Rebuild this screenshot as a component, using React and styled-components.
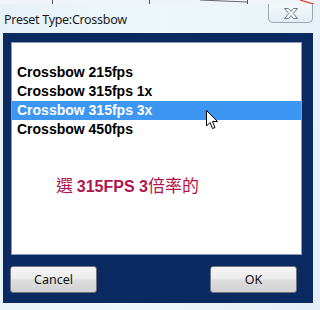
import styled, { createGlobalStyle } from 'styled-components';

const GlobalStyle = createGlobalStyle`
  html, body {
    margin: 0;
    padding: 0;
    width: 320px;
    height: 310px;
    overflow: hidden;
    background: #eaf4f9;
  }
`;

const Window = styled.div`
  width: 320px;
  height: 310px;
  display: flex;
  flex-direction: column;
  background: linear-gradient(100deg, #e6f1f7 0%, #eef7fb 45%, #e4f0f6 100%);
  font-family: "Noto Sans", "Open Sans", sans-serif;
`;

const Backdrop = styled.svg`
  display: block;
  width: 320px;
  height: 4px;
  flex: none;
`;

const TitleBar = styled.div`
  height: 29px;
  display: flex;
  justify-content: space-between;
  align-items: flex-start;
  flex: none;
`;

const Title = styled.div`
  padding: 7px 0 0 4px;
  font-size: 12.5px;
  color: #1a1a1a;
  letter-spacing: -0.3px;
`;

const CloseButton = styled.div`
  width: 45px;
  height: 19px;
  margin-right: 7px;
  box-sizing: border-box;
  border: 1px solid #9aa6b0;
  border-top: none;
  border-radius: 0 0 5px 5px;
  background: linear-gradient(#f4f9fc, #e3edf3);
  display: flex;
  align-items: center;
  justify-content: center;
`;

const Panel = styled.div`
  margin: 0 7px 0 3px;
  height: 270px;
  box-sizing: border-box;
  background: #0c2a62;
  padding: 9px 11px 10px 8px;
  display: flex;
  flex-direction: column;
`;

const ListBox = styled.div`
  position: relative;
  height: 214px;
  box-sizing: border-box;
  background: #ffffff;
  border: 1px solid #8e9bb4;
  padding-top: 20px;
`;

const Row = styled.div`
  height: 19px;
  line-height: 19px;
  padding-left: 5px;
  font-family: "Liberation Sans", Arial, sans-serif;
  font-weight: bold;
  font-size: 14px;
  color: ${(p) => (p.$selected ? '#ffffff' : '#000000')};
  background: ${(p) => (p.$selected ? '#3d97f2' : 'transparent')};
`;

const Note = styled.div`
  margin-top: 35px;
  padding-left: 44px;
  line-height: 22px;
  color: #b0154c;
  font-size: 17px;
  font-family: "Noto Sans CJK TC", "Noto Sans", sans-serif;
  white-space: nowrap;
`;

const Strong = styled.b`
  font-family: "Liberation Sans", Arial, sans-serif;
  font-size: 16px;
`;

const Cursor = styled.svg`
  position: absolute;
  left: 194px;
  top: 67px;
  width: 13px;
  height: 20px;
`;

const ButtonRow = styled.div`
  display: flex;
  justify-content: space-between;
  margin: 11px 0 0 -1px;
  padding-right: 5px;
`;

const Button = styled.div`
  width: 87px;
  height: 27px;
  box-sizing: border-box;
  border: 1px solid #6f7480;
  border-radius: 3px;
  background: linear-gradient(#f6f6f6 0%, #ebebeb 48%, #dddddd 52%, #d2d2d2 100%);
  display: flex;
  align-items: center;
  justify-content: center;
  font-size: 12.5px;
  color: #111;
`;

const items = ['Crossbow 215fps', 'Crossbow 315fps 1x', 'Crossbow 315fps 3x', 'Crossbow 450fps'];

export default function App() {
  return (
    <>
      <GlobalStyle />
      <Window>
        <Backdrop viewBox="0 0 320 4">
          <rect width="320" height="4" fill="#f1f4f6" />
          <line x1="52.5" y1="0" x2="52.5" y2="4" stroke="#555" />
          <line x1="149.5" y1="0" x2="149.5" y2="4" stroke="#555" />
          <line x1="247.5" y1="0" x2="247.5" y2="4" stroke="#555" />
          <line x1="200" y1="0" x2="247" y2="2" stroke="#666" />
          <line x1="300" y1="0" x2="320" y2="6" stroke="#d33" strokeWidth="1.2" />
        </Backdrop>
        <TitleBar>
          <Title>Preset Type:Crossbow</Title>
          <CloseButton>
            <svg width="16" height="13" viewBox="0 0 16 13">
              <path
                d="M1.5 1.5 H5.5 L8 4.5 L10.5 1.5 H14.5 L10.2 6.5 L14.5 11.5 H10.5 L8 8.5 L5.5 11.5 H1.5 L5.8 6.5 Z"
                fill="#ffffff"
                stroke="#6e7a86"
                strokeWidth="1"
                strokeLinejoin="round"
              />
            </svg>
          </CloseButton>
        </TitleBar>
        <Panel>
          <ListBox>
            {items.map((t, i) => (
              <Row key={t} $selected={i === 2}>{t}</Row>
            ))}
            <Note>
              選 <Strong>315FPS 3</Strong>倍率的
            </Note>
            <Cursor viewBox="0 0 13 20">
              <path
                d="M0.5 0.5 L0.5 16 L4 12.5 L6.5 18.5 L9 17.5 L6.5 11.5 L11.5 11.5 Z"
                fill="#ffffff"
                stroke="#000000"
                strokeWidth="1"
                strokeLinejoin="round"
              />
            </Cursor>
          </ListBox>
          <ButtonRow>
            <Button>Cancel</Button>
            <Button>OK</Button>
          </ButtonRow>
        </Panel>
      </Window>
    </>
  );
}
